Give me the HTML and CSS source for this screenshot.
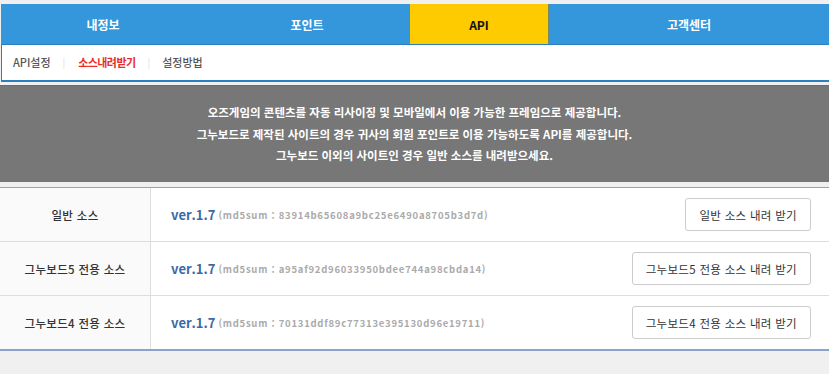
FILE: index.html
```html
<!DOCTYPE html>
<html lang="ko">
<head>
<meta charset="utf-8">
<link rel="stylesheet" href="styles.css">
</head>
<body>
<div class="wrap">
  <nav class="gnb">
    <a class="tab">내정보</a>
    <a class="tab">포인트</a>
    <a class="tab active">API</a>
    <a class="tab">고객센터</a>
  </nav>
  <div class="subnav">
    <a class="sub">API설정</a>
    <span class="sep">|</span>
    <a class="sub on">소스내려받기</a>
    <span class="sep">|</span>
    <a class="sub">설정방법</a>
  </div>
  <div class="notice">
    <p>오즈게임의 콘텐츠를 자동 리사이징 및 모바일에서 이용 가능한 프레임으로 제공합니다.</p>
    <p>그누보드로 제작된 사이트의 경우 귀사의 회원 포인트로 이용 가능하도록 API를 제공합니다.</p>
    <p>그누보드 이외의 사이트인 경우 일반 소스를 내려받으세요.</p>
  </div>
  <div class="table">
    <div class="row">
      <div class="name">일반 소스</div>
      <div class="info"><span class="ver">ver.1.7</span><span class="md5">(md5sum : 83914b65608a9bc25e6490a8705b3d7d)</span></div>
      <div class="act"><button class="btn">일반 소스 내려 받기</button></div>
    </div>
    <div class="row">
      <div class="name">그누보드5 전용 소스</div>
      <div class="info"><span class="ver">ver.1.7</span><span class="md5">(md5sum : a95af92d96033950bdee744a98cbda14)</span></div>
      <div class="act"><button class="btn">그누보드5 전용 소스 내려 받기</button></div>
    </div>
    <div class="row">
      <div class="name">그누보드4 전용 소스</div>
      <div class="info"><span class="ver">ver.1.7</span><span class="md5">(md5sum : 70131ddf89c77313e395130d96e19711)</span></div>
      <div class="act"><button class="btn">그누보드4 전용 소스 내려 받기</button></div>
    </div>
  </div>
</div>
</body>
</html>
```
FILE: styles.css
```css
* { box-sizing: border-box; }
html, body { margin: 0; padding: 0; background: #f0f0f0; }
body {
  font-family: "Noto Sans CJK KR", "Noto Sans", sans-serif;
  color: #333;
  width: 829px;
  height: 374px;
  overflow: hidden;
}
.wrap { padding-top: 4px; }
.gnb {
  display: grid;
  grid-template-columns: 204px 204px 140px 1fr;
  margin-left: 1px;
  height: 41px;
  background: #3497dc;
  border-bottom: 1px solid #2a7fbf;
}
.tab {
  display: flex;
  align-items: center;
  justify-content: center;
  padding-top: 1px;
  color: #fff;
  font-size: 12px;
  font-weight: 700;
}
.tab.active {
  background: #fecb00;
  color: #111;
  border-left: 1px solid #7a8a60;
  border-right: 1px solid #7a8a60;
}
.subnav {
  display: flex;
  align-items: center;
  margin-left: 1px;
  height: 37px;
  padding-left: 11px;
  padding-bottom: 2px;
  background: #fff;
  border-left: 1px solid #2a7fbf;
  border-bottom: 2px solid #2a7fbf;
  font-size: 11px;
}
.sub { color: #555; font-weight: 500; }
.sub.on { color: #ec2a2a; font-weight: 700; letter-spacing: -0.6px; }
.sep { color: #ddd; margin: 0 12px 0 12px; font-size: 10px; }
.sep + .sub.on { margin-left: 1px; }
.notice {
  margin-top: 3px;
  height: 97px;
  background: #777;
  border-top: 1px solid #6d6a72;
  color: #fff;
  text-align: center;
  font-size: 11.5px;
  font-weight: 700;
  padding-top: 16px;
}
.notice p { margin: 0; line-height: 21.5px; }
.table {
  margin-top: 5px;
  background: #fff;
  border-top: 1px solid #8aa2cc;
  border-bottom: 2px solid #8aa2cc;
}
.row {
  display: grid;
  grid-template-columns: 151px 1fr auto;
  height: 54px;
  border-bottom: 1px solid #ddd;
}
.row:last-child { border-bottom: 0; height: 53px; }
.name {
  background: #fafafa;
  border-right: 1px solid #ddd;
  display: flex;
  align-items: center;
  justify-content: center;
  font-size: 11.5px;
  font-weight: 500;
  letter-spacing: 0.3px;
  color: #333;
}
.info {
  display: flex;
  align-items: center;
  padding-left: 20px;
}
.ver { color: #3a6aa6; font-weight: 700; font-size: 13px; margin-right: 3px; }
.md5 { color: #aaa; font-weight: 700; font-size: 9.5px; letter-spacing: 0.75px; }
.act {
  display: flex;
  align-items: center;
  padding-right: 18px;
}
.btn {
  font-family: inherit;
  font-size: 11.5px;
  letter-spacing: 0.3px;
  color: #333;
  background: #fff;
  border: 1px solid #ccc;
  border-radius: 3px;
  height: 33px;
  padding: 0 13px;
}
```
